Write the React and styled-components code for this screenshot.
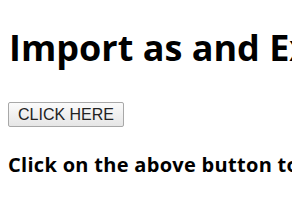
import React from "react";
import styled, { createGlobalStyle } from "styled-components";

const GlobalStyle = createGlobalStyle`
  body {
    margin: 8px;
    background: #fff;
    color: #000;
    font-family: "Open Sans", "Noto Sans", sans-serif;
    overflow: hidden;
  }
`;

const Page = styled.div`
  display: flex;
  flex-direction: column;
  align-items: flex-start;
  white-space: nowrap;
`;

const Title = styled.h1`
  font-size: 36px;
  font-weight: 700;
  margin: 16px 0 30px 1px;
  line-height: 48px;
`;

const ClickButton = styled.button`
  font-family: "Liberation Sans", Arial, sans-serif;
  font-size: 16px;
  color: #222;
  height: 25px;
  width: 116px;
  padding: 0 8px;
  border: 1px solid #a8a8a8;
  border-radius: 2px;
  background: linear-gradient(#fbfbfb, #e6e6e6);
  cursor: pointer;
`;

const Message = styled.h3`
  font-size: 20px;
  font-weight: 700;
  margin: 24px 0 0;
  line-height: 28px;
  letter-spacing: 0.3px;
`;

function App() {
  return (
    <Page>
      <GlobalStyle />
      <Title>Import as and Export as in React</Title>
      <ClickButton>CLICK HERE</ClickButton>
      <Message>Click on the above button to see the result</Message>
    </Page>
  );
}

export default App;
